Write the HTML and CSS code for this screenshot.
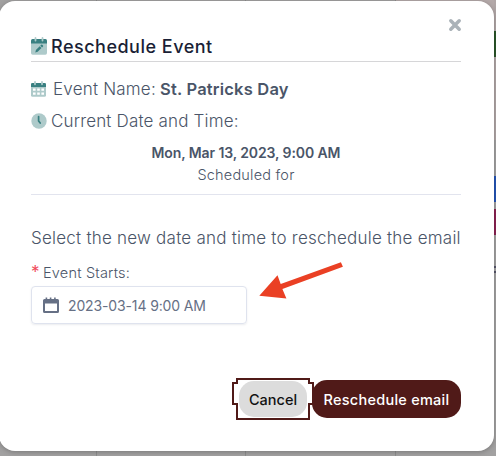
FILE: index.html
```html
<!DOCTYPE html>
<html lang="en">

<head>
    <meta charset="UTF-8">
    <meta name="viewport" content="width=device-width, initial-scale=1.0">
    <title>Reschedule Event</title>
    <link rel="stylesheet" href="styles.css">
</head>

<body>
    <!-- Calendar behind the dialog -->
    <div class="calendar">
        <div class="day"></div>
        <div class="day"></div>
        <div class="day"></div>
        <div class="day today"></div>
        <div class="events">
            <span class="event green"></span>
            <span class="event blue"></span>
            <span class="event pink"></span>
            <span class="event plain"></span>
        </div>
    </div>

    <div class="modal" role="dialog">
        <button class="close" aria-label="Close">
            <svg width="14" height="14" viewBox="0 0 14 14">
                <path d="M2.8 2.8L11.2 11.2M11.2 2.8L2.8 11.2" />
            </svg>
        </button>

        <header class="modal-header">
            <svg class="icon" width="16" height="18" viewBox="0 0 16 18">
                <path class="light" d="M0 6h16v10q0 1.7-1.7 1.7H1.7Q0 17.7 0 16z" />
                <path class="dark" d="M0 6.5V3.5Q0 2 1.5 2h13Q16 2 16 3.5v3z" />
                <path class="ring" d="M4.5 .9v2.6M11.5 .9v2.6" />
                <path class="dark" d="M4.3 15.4l.6-2.4 3.8-3.7 1.8 1.8-3.8 3.7zM9.3 8.7l.9-.9q.5-.4 1 0l.8.8q.4.5 0 1l-.9.9z" />
            </svg>
            <h2 class="title">Reschedule Event</h2>
        </header>

        <div class="row event-row">
            <svg class="icon" width="15" height="16" viewBox="0 0 15 16">
                <path class="light" d="M0 5.5h15v8.8q0 1.5-1.5 1.5h-12Q0 15.8 0 14.3z" />
                <path class="dark" d="M0 6V3.3Q0 2 1.3 2h12.4Q15 2 15 3.3V6z" />
                <path class="ring" d="M4 .9v2.4M11 .9v2.4" />
                <path class="hole" d="M2 7.5h2.6v2.2H2zM6.2 7.5h2.6v2.2H6.2zM10.4 7.5H13v2.2h-2.6zM2 11.5h2.6v2.3H2zM6.2 11.5h2.6v2.3H6.2zM10.4 11.5H13v2.3h-2.6z" />
            </svg>
            <p class="name-label">Event Name:</p>
            <strong class="name">St. Patricks Day</strong>
        </div>
        <div class="row">
            <svg class="icon" width="16" height="16" viewBox="0 0 16 16">
                <circle class="light" cx="8" cy="8" r="7.7" />
                <path class="hand" d="M7.6 3.6v4.3l1.6 2.2" />
            </svg>
            <p class="current">Current Date and Time:</p>
        </div>

        <div class="scheduled">
            <strong class="date">Mon, Mar 13, 2023, 9:00 AM</strong>
            <span class="date-note">Scheduled for</span>
        </div>

        <p class="hint">Select the new date and time to reschedule the email</p>

        <label class="label" for="starts"><span class="required">*</span><span class="label-text">Event Starts:</span></label>
        <div class="field">
            <svg width="16" height="17" viewBox="0 0 16 17">
                <path class="cal" fill-rule="evenodd" d="M0 3.5Q0 2 1.5 2H2.6V.5h1.6V2h2.6V.5h1.6V2h2.7V.5h1.6V2h1.8Q16 2 16 3.5v11q0 1.5-1.5 1.5h-13Q0 16 0 14.5zM2 6.5V14h12V6.5z" />
            </svg>
            <input class="input" type="text" id="starts" value="2023-03-14 9:00 AM">
        </div>

        <footer class="buttons">
            <button class="btn cancel">
                <span>Cancel</span>
                <svg class="focus" width="82" height="42" viewBox="0 0 82 42">
                    <path d="M5 1h72v4h4v21h-4v15H5V26H1V5h4z" />
                </svg>
            </button>
            <button class="btn submit">Reschedule email</button>
        </footer>

        <svg class="arrow" width="84" height="38" viewBox="0 0 84 38">
            <path d="M.3 33.7L18.5 13.2l3.2 8.8L81.9 .2l2 4.6L23.4 27.1l4 9.5z" />
        </svg>
    </div>
</body>

</html>
```

FILE: styles.css
```css
* {
    box-sizing: border-box;
}

body {
    font-family: 'Inter', 'Open Sans', sans-serif;
    margin: 0;
    height: 456px;
    position: relative;
    overflow: hidden;
    background-color: #a2a1a1;
    color: #4a5568;
}

h2,
p {
    margin: 0;
    font-weight: 300;
}

button {
    font-family: inherit;
    border: none;
    padding: 0;
    cursor: pointer;
}

svg {
    display: block;
    flex: none;
}

/* Calendar */
.calendar {
    display: grid;
    grid-template-columns: 97px 149px 150px 98px 2px;
    height: 456px;
}

.day {
    border-right: 1px solid #8c8c8c;
}

.today {
    border-right: none;
    background: linear-gradient(#b4a9a9 140px, #a2a1a1 140px);
}

.events {
    display: flex;
    flex-direction: column;
    padding-top: 31px;
    background: linear-gradient(#b0a6a6 140px, #a2a1a1 140px);
}

.event {
    height: 26px;
}

.green {
    background-color: #2a5529;
    margin-bottom: 119px;
}

.blue {
    background-color: #2454b6;
    margin-bottom: 7px;
}

.pink {
    background-color: #8b2252;
    margin-bottom: 31px;
}

.plain {
    height: 7px;
    border-top: 2px solid #55556a;
    border-bottom: 2px solid #55556a;
}

/* Dialog */
.modal {
    position: absolute;
    top: 1px;
    left: -1px;
    width: 495px;
    height: 450px;
    padding: 31px 33px 33px 32px;
    display: flex;
    flex-direction: column;
    background-color: #fff;
    border-radius: 16px;
    box-shadow: 0 1px 5px rgba(0, 0, 0, 0.25);
}

.close {
    position: absolute;
    top: 17px;
    right: 32px;
    background: none;
}

.close path {
    stroke: #aab2b8;
    stroke-width: 3.5;
    stroke-linecap: round;
}

.modal-header {
    display: flex;
    align-items: center;
    gap: 4px;
    height: 30px;
    margin-bottom: 11px;
    border-bottom: 1px solid #d6d6d8;
}

.modal-header .icon {
    margin-bottom: 1px;
}

.title {
    font-size: 18px;
    font-weight: 450;
    color: #1a1f36;
    letter-spacing: 0.5px;
    white-space: nowrap;
}

.light {
    fill: #aecaca;
}

.dark {
    fill: #398081;
}

.hole {
    fill: #fff;
}

.ring {
    stroke: #aecaca;
    stroke-width: 1.8;
    stroke-linecap: round;
}

.hand {
    fill: none;
    stroke: #398081;
    stroke-width: 1.7;
    stroke-linecap: round;
}

.row {
    display: flex;
    align-items: center;
    gap: 4px;
    height: 32px;
    font-size: 17px;
    white-space: nowrap;
}

.event-row {
    gap: 7px;
}

.name-label {
    width: 100px;
    letter-spacing: 0.2px;
}

.name {
    font-size: 16.5px;
    font-weight: 600;
    letter-spacing: 0.2px;
}

.current {
    letter-spacing: 0.17px;
}

.scheduled {
    display: flex;
    flex-direction: column;
    align-items: center;
    height: 58px;
    padding-top: 5px;
    font-size: 14px;
    font-weight: 300;
    line-height: 22px;
    border-bottom: 1px solid #e2e4ee;
}

.date {
    font-weight: 600;
    letter-spacing: -0.1px;
}

.date-note {
    font-size: 14.5px;
    letter-spacing: 0.2px;
}

.hint {
    margin-top: 31px;
    font-size: 17px;
    line-height: 24px;
    letter-spacing: 0.23px;
    white-space: nowrap;
}

.label {
    display: flex;
    gap: 4px;
    height: 36px;
    padding-top: 13px;
    font-size: 14.5px;
    font-weight: 300;
    line-height: 20px;
    letter-spacing: 0.2px;
}

.required {
    width: 8px;
    color: #f04a5a;
    font-size: 17px;
    font-weight: 400;
    line-height: 18px;
}

.field {
    display: flex;
    align-items: center;
    gap: 9px;
    width: 216px;
    height: 38px;
    padding-left: 11px;
    border: 1px solid #dfe3ee;
    border-radius: 4px;
    box-shadow: 0 1px 2px rgba(60, 70, 100, 0.1);
}

.cal {
    fill: #667085;
}

.input {
    width: 170px;
    padding: 0;
    border: none;
    outline: none;
    font-family: inherit;
    font-size: 14px;
    letter-spacing: -0.13px;
    color: #667085;
}

.buttons {
    display: flex;
    justify-content: flex-end;
    align-items: center;
    gap: 5px;
    margin-top: auto;
}

.btn {
    height: 38px;
    border-radius: 15px;
    font-size: 14.5px;
    font-weight: 500;
    white-space: nowrap;
}

.cancel {
    position: relative;
    width: 68px;
    height: 36px;
    background-color: #dcdcdc;
    color: #111;
}

/* Focus ring */
.focus {
    position: absolute;
    top: -3px;
    left: -7px;
}

.focus path {
    fill: none;
    stroke: #501a18;
    stroke-width: 2;
}

.submit {
    width: 149px;
    background-color: #501a18;
    color: #fff;
    letter-spacing: 0.25px;
}

.arrow {
    position: absolute;
    top: 261px;
    left: 260px;
}

.arrow path {
    fill: #ea4024;
}
```
